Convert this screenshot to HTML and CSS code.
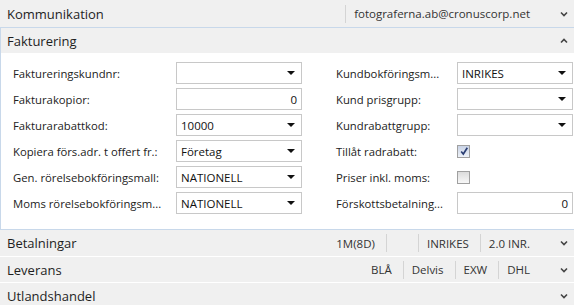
FILE: index.html
```html
<!DOCTYPE html>
<html>
<head>
<meta charset="utf-8">
<link rel="stylesheet" href="styles.css">
</head>
<body>
<div class="page">
  <div class="hdr first">
    <span class="title">Kommunikation</span>
    <div class="summary"><span class="sep"></span><span class="val">fotograferna.ab@cronuscorp.net</span></div>
    <svg class="chev" viewBox="0 0 8 6" width="8" height="6"><path d="M1 1.5 L4 4.5 L7 1.5" fill="none" stroke="#444" stroke-width="1.6"/></svg>
  </div>
  <div class="open">
    <div class="hdr">
      <span class="title">Fakturering</span>
      <div class="summary"></div>
      <svg class="chev" viewBox="0 0 8 6" width="8" height="6"><path d="M1 4.5 L4 1.5 L7 4.5" fill="none" stroke="#444" stroke-width="1.6"/></svg>
    </div>
    <div class="body">
      <div class="col left">
        <div class="row"><span class="lbl">Faktureringskundnr:</span><div class="box dd"><span></span><i class="arr"></i></div></div>
        <div class="row"><span class="lbl">Fakturakopior:</span><div class="box num"><span>0</span></div></div>
        <div class="row"><span class="lbl">Fakturarabattkod:</span><div class="box dd"><span>10000</span><i class="arr"></i></div></div>
        <div class="row"><span class="lbl">Kopiera förs.adr. t offert fr.:</span><div class="box dd"><span>Företag</span><i class="arr"></i></div></div>
        <div class="row"><span class="lbl">Gen. rörelsebokföringsmall:</span><div class="box dd"><span>NATIONELL</span><i class="arr"></i></div></div>
        <div class="row"><span class="lbl">Moms rörelsebokföringsm...</span><div class="box dd"><span>NATIONELL</span><i class="arr"></i></div></div>
      </div>
      <div class="col right">
        <div class="row"><span class="lbl">Kundbokföringsm...</span><div class="box dd"><span>INRIKES</span><i class="arr"></i></div></div>
        <div class="row"><span class="lbl">Kund prisgrupp:</span><div class="box dd"><span></span><i class="arr"></i></div></div>
        <div class="row"><span class="lbl">Kundrabattgrupp:</span><div class="box dd"><span></span><i class="arr"></i></div></div>
        <div class="row"><span class="lbl">Tillåt radrabatt:</span><div class="cbwrap"><span class="cb checked"><svg viewBox="0 0 10 10" width="10" height="10"><path d="M2.2 5.5 L4.3 8 L8.3 1.8" fill="none" stroke="#2b3f74" stroke-width="1.7"/></svg></span></div></div>
        <div class="row"><span class="lbl">Priser inkl. moms:</span><div class="cbwrap"><span class="cb"></span></div></div>
        <div class="row"><span class="lbl">Förskottsbetalning...</span><div class="box num"><span>0</span></div></div>
      </div>
    </div>
  </div>
  <div class="hdr pay">
    <span class="title">Betalningar</span>
    <div class="summary"><span class="val">1M(8D)</span><span class="sep"></span><span class="val empty"></span><span class="sep"></span><span class="val">INRIKES</span><span class="sep"></span><span class="val">2.0 INR.</span></div>
    <svg class="chev" viewBox="0 0 8 6" width="8" height="6"><path d="M1 1.5 L4 4.5 L7 1.5" fill="none" stroke="#444" stroke-width="1.6"/></svg>
  </div>
  <div class="hdr">
    <span class="title">Leverans</span>
    <div class="summary"><span class="val">BLÅ</span><span class="sep"></span><span class="val">Delvis</span><span class="sep"></span><span class="val">EXW</span><span class="sep"></span><span class="val">DHL</span></div>
    <svg class="chev" viewBox="0 0 8 6" width="8" height="6"><path d="M1 1.5 L4 4.5 L7 1.5" fill="none" stroke="#444" stroke-width="1.6"/></svg>
  </div>
  <div class="hdr last">
    <span class="title">Utlandshandel</span>
    <div class="summary"></div>
    <svg class="chev" viewBox="0 0 8 6" width="8" height="6"><path d="M1 1.5 L4 4.5 L7 1.5" fill="none" stroke="#444" stroke-width="1.6"/></svg>
  </div>
</div>
</body>
</html>
```
FILE: styles.css
```css
html, body { margin: 0; padding: 0; background: #fff; }
body { font-family: "Open Sans", "Noto Sans", sans-serif; color: #222; width: 574px; height: 305px; overflow: hidden; }
.page { display: flex; flex-direction: column; }
.hdr {
  display: flex; align-items: center; height: 25px; background: #f0f0f0;
  border-bottom: 1px solid #fff; padding-left: 7px; padding-right: 4px; flex-shrink: 0;
}
.hdr.pay { height: 26px; }
.hdr.first { height: 27px; border-bottom: 1px solid #c8d8ea; }
.hdr.last { border-bottom: none; height: 25px; }
.title { font-size: 13px; color: #1e1e1e; }
.summary { flex: 1; display: flex; justify-content: flex-end; align-items: center; font-size: 11.5px; color: #333; }
.summary .val { padding: 0 11px 0 8px; }
.summary .val:last-child { padding-right: 8px; }
.summary .val.empty { width: 12px; }
.summary .sep { width: 1px; height: 18px; background: #d4d4d4; }
.chev { margin-left: 22px; margin-right: 2px; }
.open { border-left: 1px solid #c8d8ea; border-bottom: 1px solid #c8d8ea; flex-shrink: 0; }
.open .hdr { border-bottom: none; padding-left: 6px; height: 25px; }
.body { display: flex; padding: 9px 0 10px 12px; height: 157px; }
.col { display: flex; flex-direction: column; gap: 4px; }
.left { width: 323px; }
.right { flex: 1; }
.row { display: flex; align-items: center; height: 22px; }
.left .lbl { width: 163px; }
.right .lbl { width: 121px; }
.lbl { font-size: 11.3px; color: #222; white-space: nowrap; }
.box {
  box-sizing: border-box; height: 22px; border: 1px solid #c8c8c8; display: flex; align-items: center;
  font-size: 11.5px; padding: 0 4px; color: #111; background: #fff;
}
.left .box { width: 126px; }
.right .box { width: 116px; }
.box span { flex: 1; }
.box.num span { text-align: right; }
.arr { width: 0; height: 0; border-left: 4px solid transparent; border-right: 4px solid transparent; border-top: 4px solid #111; margin-right: 2px; }
.cbwrap { display: flex; align-items: center; }
.cb { box-sizing: border-box; width: 13px; height: 13px; border: 1px solid #a0a0a0; background: linear-gradient(#dcdcdc, #f8f8f8); display: flex; align-items: center; justify-content: center; }
.cb.checked { background: linear-gradient(#c9d3e6, #eef2f8); }
```
